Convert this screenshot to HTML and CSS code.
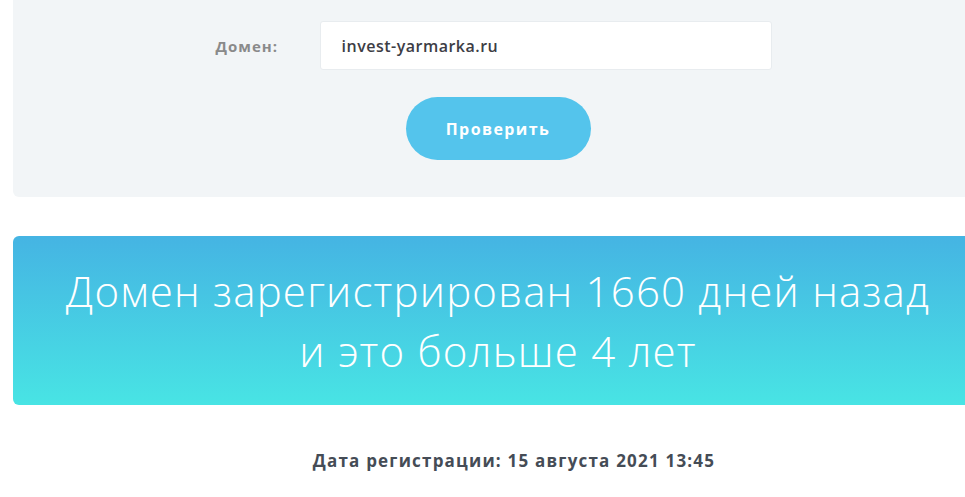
FILE: index.html
```html
<!DOCTYPE html>
<html lang="ru">
<head>
    <meta charset="UTF-8">
    <meta name="viewport" content="width=device-width, initial-scale=1.0">
    <title>Проверка возраста домена</title>
    <link rel="stylesheet" href="styles.css">
</head>
<body>

    <div class="page">
        <!-- форма проверки -->
        <form class="check-form" onsubmit="return false;">
            <div class="form-row">
                <label for="domain">Домен:</label>
                <input type="text" id="domain" name="domain" value="invest-yarmarka.ru" />
            </div>
            <button type="submit">Проверить</button>
        </form>

        <!-- результат -->
        <div class="result-banner">
            <h2>Домен зарегистрирован 1660 дней назад<br>и это больше 4 лет</h2>
        </div>

        <p class="reg-date">Дата регистрации: 15 августа 2021 13:45</p>
    </div>

</body>
</html>
```

FILE: styles.css
```css
/* общие настройки */
html, body {
    margin: 0;
    padding: 0;
    overflow: hidden;
}

body {
    font-family: 'Open Sans', 'DejaVu Sans', sans-serif;
    background: #fff;
    color: #444;
}

.page {
    width: 970px;
    margin-left: 13px;
}

/* форма */
.check-form {
    background: #f2f5f7;
    border-radius: 0 0 6px 6px;
    padding: 21px 0 37px;
    display: flex;
    flex-direction: column;
    align-items: center;
}

.form-row {
    display: flex;
    align-items: center;
    margin-left: -9px;
}

.form-row label {
    width: 104px;
    font-size: 15px;
    font-weight: 700;
    letter-spacing: 1px;
    color: #8a8a8a;
}

.form-row input {
    width: 452px;
    height: 49px;
    box-sizing: border-box;
    padding: 0 21px;
    border: 1px solid #e8ecef;
    border-radius: 3px;
    background: #fff;
    font-family: inherit;
    font-size: 16px;
    font-weight: 600;
    letter-spacing: 0.5px;
    color: #3d3d45;
    outline: none;
}

.check-form button {
    margin-top: 27px;
    width: 185px;
    height: 63px;
    border: none;
    border-radius: 32px;
    background: #54c4ec;
    color: #fff;
    font-family: inherit;
    font-size: 16px;
    font-weight: 700;
    letter-spacing: 1.4px;
    cursor: pointer;
}

/* баннер результата */
.result-banner {
    margin-top: 39px;
    height: 169px;
    border-radius: 6px;
    background: linear-gradient(to bottom, #45b4e3, #48e4e4);
    display: flex;
    align-items: center;
    justify-content: center;
}

.result-banner h2 {
    margin: 0;
    color: #fff;
    font-size: 42px;
    font-weight: 300;
    letter-spacing: 1.2px;
    line-height: 60px;
    text-align: center;
}

/* дата */
.reg-date {
    margin: 44px 0 0;
    padding-left: 32px;
    text-align: center;
    font-size: 17px;
    font-weight: 700;
    letter-spacing: 1.2px;
    color: #454c56;
}
```
